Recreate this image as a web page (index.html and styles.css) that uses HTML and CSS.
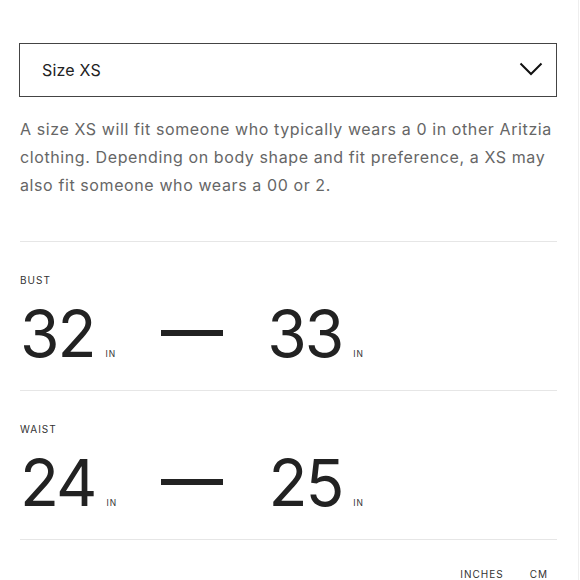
FILE: index.html
```html
<!DOCTYPE html>
<html lang="en">
<head>
<meta charset="utf-8">
<title>Size guide</title>
<link rel="stylesheet" href="styles.css">
</head>
<body>
<div class="page">
  <div class="select">
    <span class="select-label">Size XS</span>
    <svg class="chevron" width="24" height="14" viewBox="0 0 24 14" aria-hidden="true">
      <path d="M1.5 1.5 L12 12 L22.5 1.5" fill="none" stroke="#111" stroke-width="2"/>
    </svg>
  </div>
  <p class="desc">A size XS will fit someone who typically wears a 0 in other Aritzia clothing. Depending on body shape and fit preference, a XS may also fit someone who wears a 00 or 2.</p>

  <section class="measure">
    <div class="measure-label">BUST</div>
    <div class="range">
      <div class="val val-left"><span class="num">32</span><span class="unit">IN</span></div>
      <div class="dash"></div>
      <div class="val val-right"><span class="num">33</span><span class="unit">IN</span></div>
    </div>
  </section>

  <section class="measure">
    <div class="measure-label">WAIST</div>
    <div class="range">
      <div class="val val-left"><span class="num">24</span><span class="unit">IN</span></div>
      <div class="dash"></div>
      <div class="val val-right"><span class="num">25</span><span class="unit">IN</span></div>
    </div>
  </section>

  <div class="units">
    <span class="unit-toggle">INCHES</span>
    <span class="unit-toggle">CM</span>
  </div>
</div>
</body>
</html>
```
FILE: styles.css
```css
html, body {
  margin: 0;
  padding: 0;
  background: #fff;
}
body {
  font-family: "Inter", "Liberation Sans", sans-serif;
  color: #222;
}
.page {
  width: 579px;
  height: 580px;
  overflow: hidden;
  box-sizing: border-box;
  padding: 43px 21px 0 20px;
  border-right: 1px solid #eeeeee;
}
.select {
  height: 54px;
  box-sizing: border-box;
  border: 1.5px solid #444;
  margin-left: -1px;
  display: flex;
  align-items: center;
  justify-content: space-between;
  padding: 0 13px 0 22px;
}
.select-label {
  font-size: 16px;
  letter-spacing: 0.2px;
  color: #222;
}
.chevron {
  display: block;
  margin-top: -2px;
}
.desc {
  margin: 18px 0 0 0;
  font-size: 16px;
  line-height: 28px;
  letter-spacing: 0.6px;
  color: #666;
  padding-bottom: 42px;
  border-bottom: 1px solid #e6e6e6;
}
.measure {
  border-bottom: 1px solid #e6e6e6;
  height: 149px;
  box-sizing: border-box;
  padding-top: 32px;
}
.measure-label {
  font-size: 10px;
  letter-spacing: 1px;
  color: #333;
  line-height: 12px;
}
.range {
  display: flex;
  align-items: flex-end;
  margin-top: 16px;
}
.val {
  width: 141px;
  display: flex;
  align-items: baseline;
}
.val-right {
  justify-content: flex-end;
  padding-right: 1px;
}
.num {
  font-size: 64px;
  line-height: 64px;
  letter-spacing: -2px;
  color: #222;
}
.unit {
  font-size: 8.5px;
  letter-spacing: 1px;
  color: #333;
  margin-left: 11px;
}
.dash {
  width: 62px;
  height: 6px;
  background: #222;
  align-self: center;
  margin-top: -2px;
}
.units {
  display: flex;
  justify-content: flex-end;
  gap: 26px;
  padding-right: 9px;
  margin-top: 28px;
  line-height: 12px;
}
.unit-toggle {
  font-size: 10px;
  letter-spacing: 1px;
  color: #333;
}
```
